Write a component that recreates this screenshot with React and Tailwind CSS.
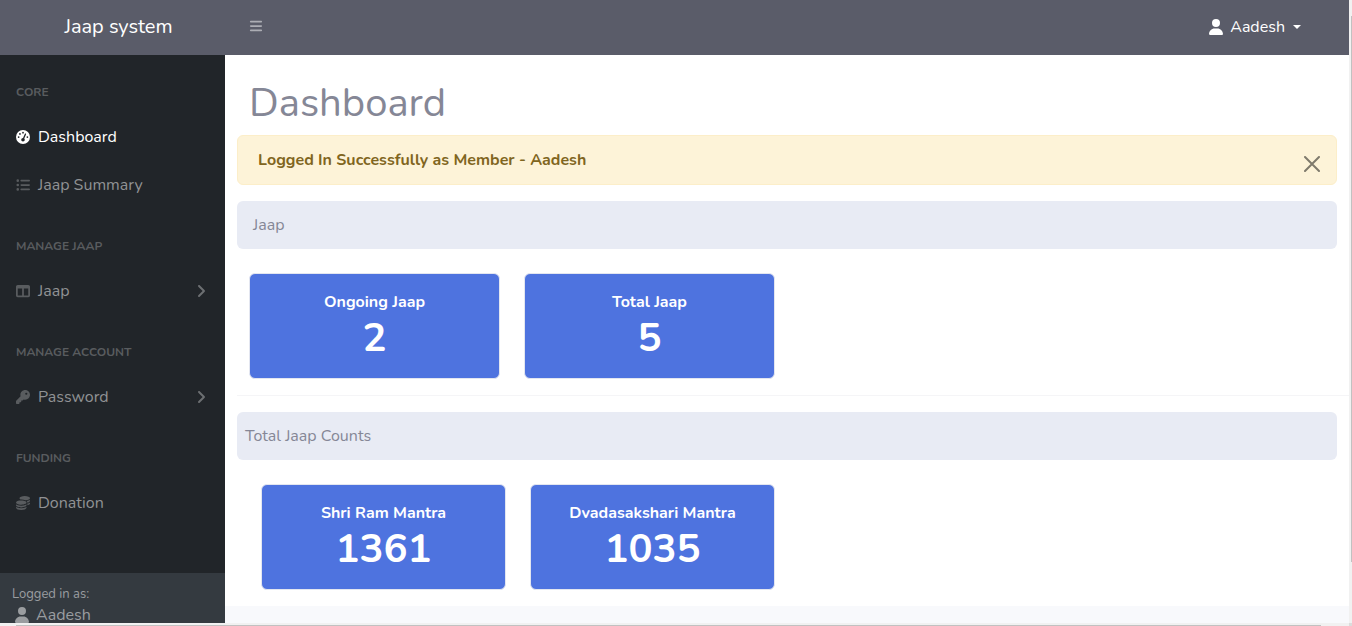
import React from "react";
import {
  FaGaugeHigh,
  FaListUl,
  FaTableColumns,
  FaKey,
  FaCoins,
  FaBars,
  FaAngleRight,
  FaUser,
} from "react-icons/fa6";

function MenuHeading({ children }) {
  return (
    <h2 className="px-4 pt-7 pb-3 text-[12px] leading-[18px] font-bold text-[#595c5f] uppercase">
      {children}
    </h2>
  );
}

function MenuLink({ icon: Icon, active, expandable, children }) {
  return (
    <a
      href="#"
      className={
        active
          ? "flex h-12 items-center px-4 text-white"
          : "flex h-12 items-center px-4 text-[#909294]"
      }
    >
      <Icon
        className={
          active ? "mr-2 size-[14px] text-white" : "mr-2 size-[14px] text-[#595c5f]"
        }
      />
      <span>{children}</span>
      {expandable && <FaAngleRight className="ml-auto size-4 text-[#6c6f72]" />}
    </a>
  );
}

function SectionTitle({ className, children }) {
  return (
    <h2 className={`mr-3 flex h-12 items-center rounded-md bg-[#e8ebf4] text-[#858796] ${className}`}>
      {children}
    </h2>
  );
}

function StatCard({ label, value }) {
  return (
    <div className="flex h-[106px] flex-col items-center rounded-md border border-[#e3e6f0] bg-[#4e73df] pt-4 font-bold text-white">
      <div className="text-[16px] leading-6">{label}</div>
      <div className="text-[40px] leading-12">{value}</div>
    </div>
  );
}

export default function App() {
  return (
    <div className="grid h-screen grid-cols-[minmax(0,1fr)_3px] grid-rows-[minmax(0,1fr)_3px] overflow-hidden bg-[#f1f1f1] font-['Nunito','Lato',sans-serif] text-[16px] leading-6">
      <div className="flex min-h-0 flex-col bg-[#f8f9fc]">
        <header className="flex h-[55px] shrink-0 items-center bg-[#5a5c69] text-white">
          <a href="#" className="w-[225px] shrink-0 pb-0.5 pl-3 text-center text-[20px] leading-[30px]">
            Jaap system
          </a>
          <button type="button" aria-label="Toggle menu" className="ml-6 pb-1 text-[#acadb4]">
            <FaBars className="size-[14px]" />
          </button>
          <button type="button" className="mr-12 ml-auto flex items-center pb-0.5">
            <FaUser className="mr-[7px] h-4 w-[14px]" />
            <span>Aadesh</span>
            <svg viewBox="0 0 8 4" className="ml-2 h-1 w-2" fill="currentColor" aria-hidden="true">
              <path d="M0 0h8L4 4z" />
            </svg>
          </button>
        </header>

        <div className="flex min-h-0 flex-1">
          <aside className="flex w-[225px] shrink-0 flex-col bg-[#212529]">
            <nav className="min-h-0 flex-1 overflow-hidden">
              <MenuHeading>Core</MenuHeading>
              <MenuLink icon={FaGaugeHigh} active>Dashboard</MenuLink>
              <MenuLink icon={FaListUl}>Jaap Summary</MenuLink>
              <MenuHeading>Manage Jaap</MenuHeading>
              <MenuLink icon={FaTableColumns} expandable>Jaap</MenuLink>
              <MenuHeading>Manage Account</MenuHeading>
              <MenuLink icon={FaKey} expandable>Password</MenuLink>
              <MenuHeading>Funding</MenuHeading>
              <MenuLink icon={FaCoins}>Donation</MenuLink>
            </nav>
            <div className="h-[50px] shrink-0 bg-[#343a40] px-3 pt-3 text-[#9a9da0]">
              <div className="text-[13px] leading-[18px]">Logged in as:</div>
              <div className="mt-1 flex items-center pl-[3px] leading-4">
                <FaUser className="mr-[7px] h-4 w-[14px]" />
                <span>Aadesh</span>
              </div>
            </div>
          </aside>

          <main className="min-w-0 flex-1 overflow-hidden">
            <div className="bg-white pb-4 pl-3">
              <h1 className="pt-6 pb-2 pl-3 text-[40px] leading-12 font-normal text-[#858796]">
                Dashboard
              </h1>
              <div
                role="alert"
                className="mr-3 flex h-[50px] items-center justify-between rounded-md border border-[#fceec9] bg-[#fdf3d8] pr-4 pl-5 font-bold text-[#806520]"
              >
                <span>Logged In Successfully as Member - Aadesh</span>
                <button type="button" aria-label="Close" className="pt-2 text-[#7f7a6c]">
                  <svg viewBox="0 0 16 16" className="size-4" fill="none" stroke="currentColor" strokeWidth="2" strokeLinecap="round">
                    <path d="M1 1l14 14M15 1L1 15" />
                  </svg>
                </button>
              </div>
              <SectionTitle className="mt-4 pl-4">Jaap</SectionTitle>
              <div className="mt-6 mr-3 grid grid-cols-4 gap-6 px-3">
                <StatCard label="Ongoing Jaap" value="2" />
                <StatCard label="Total Jaap" value="5" />
              </div>
              <hr className="my-4 border-[#f5f5f7]" />
              <SectionTitle className="pl-2">Total Jaap Counts</SectionTitle>
              <div className="mt-6 mr-3 grid grid-cols-4 gap-6 px-6">
                <StatCard label="Shri Ram Mantra" value="1361" />
                <StatCard label="Dvadasakshari Mantra" value="1035" />
              </div>
            </div>
          </main>
        </div>
      </div>

      <div className="flex flex-col items-end pt-4" aria-hidden="true">
        <div className="h-9/10 w-px bg-[#c1c1c1]" />
      </div>
      <div className="flex items-end pr-7 pl-4" aria-hidden="true">
        <div className="h-px flex-1 bg-[#c1c1c1]" />
      </div>
      <div className="bg-[#dcdcdc]" aria-hidden="true" />
    </div>
  );
}
